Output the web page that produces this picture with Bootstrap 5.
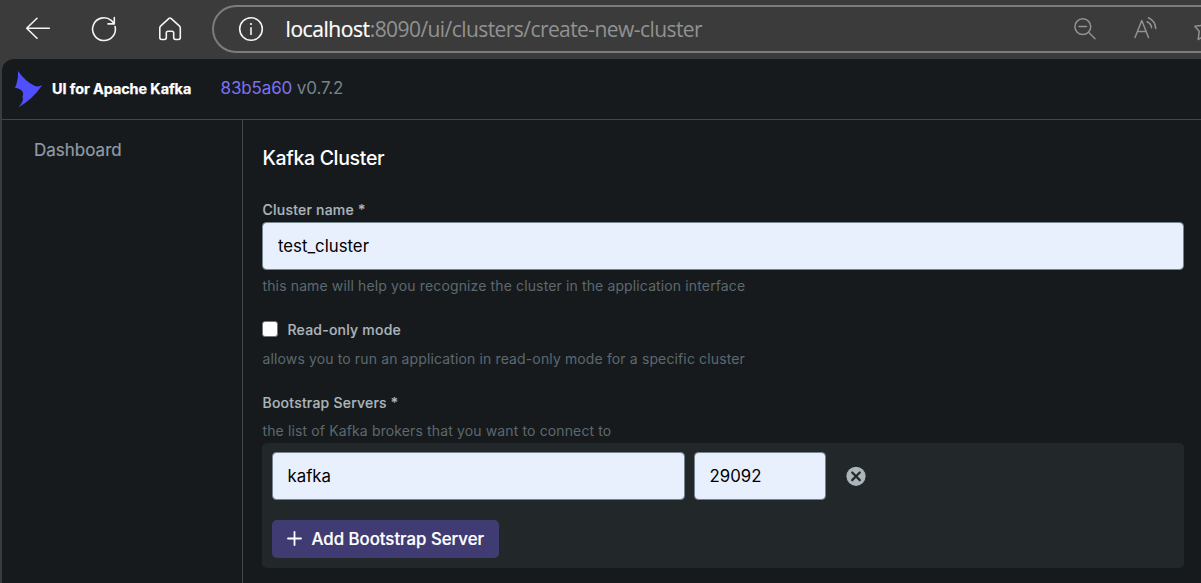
<!DOCTYPE html>
<html lang="en">
<head>
<meta charset="utf-8">
<meta name="viewport" content="width=device-width, initial-scale=1">
<title>UI for Apache Kafka</title>
<link href="https://cdn.jsdelivr.net/npm/bootstrap@5.3.0/dist/css/bootstrap.min.css" rel="stylesheet">
<style>
body { background: #3b3b3b; font-family: Inter, "Liberation Sans", sans-serif; color: #fff; height: 583px; }
svg { display: block; flex: none; }
.toolbar { height: 59px; padding: 5px 0 6px 24px; }
.toolbar-btn { width: 28px; margin-right: 38px; color: #f4f4f4; }
.toolbar-btn.home { margin-right: 28px; }
.address { height: 48px; border: 2px solid #7c7c7c; border-right: 0; border-radius: 24px 0 0 24px; padding-left: 23px; }
.address-text { font: 21px/28px "Open Sans", "Noto Sans", sans-serif; margin: 0 0 0 20.5px; color: #929292; letter-spacing: -.57px; }
.address-text span { color: #fff; letter-spacing: -.42px; -webkit-text-stroke: .2px #fff; }
.address-tools { color: #929292; gap: 36px; margin-right: -17px; }
.app-shell { margin-left: 2px; height: 524px; background: #171a1c; border-top-left-radius: 12px; }
.app-head { height: 61px; border-bottom: 1px solid #414749; padding-left: 13px; }
.brand { font-size: 14.4px; font-weight: 700; margin-left: 9px; width: 168.5px; letter-spacing: -.06px; -webkit-text-stroke: .25px #fff; }
.version { font-size: 17px; color: #73848c; letter-spacing: -.13px; }
.version a { color: #7b72f2; }
.side { width: 241px; border-right: 1px solid #414749; padding: 19px 0 0 32px; font-size: 17px; line-height: 22px; color: #8f9ca6; -webkit-text-stroke: .2px #8f9ca6; }
.main-pane { padding: 26px 17px 0 19px; }
.page-title { font-size: 19.5px; line-height: 24px; font-weight: 500; margin: 0 0 32px; padding-left: .5px; letter-spacing: -.32px; }
.field-label { font-size: 14px; font-weight: 500; line-height: 16px; padding-left: .5px; color: #abb5ba; letter-spacing: .22px; -webkit-text-stroke: .15px #abb5ba; }
.hint { font-size: 14px; line-height: 18px; padding-left: .5px; color: #5c6970; letter-spacing: .13px; }
.form-control.field { height: 48px; padding: 0 15px; font-size: 16.8px; color: #000; background: #e8f0fe; border: 1px solid #73848c; border-radius: 4.5px; }
.form-control.host, .form-control.port { padding-left: 14.5px; }
.form-check-input.flag { width: 16px; height: 16px; margin: -2px 0 0; background: #fff; border: 1px solid #767676; border-radius: 3px; }
.server-box { height: 125px; background: #22282a; border-radius: 5px; padding: 9px 10px; }
.host { width: 413px; }
.port { width: 132px; }
.btn.add-server { height: 38px; width: 227px; background: #403c73; color: #fff; font-size: 16.8px; font-weight: 500; border: 0; border-radius: 5px; padding: 1px 15px 0; gap: 9.5px; white-space: nowrap; -webkit-text-stroke: .2px #fff; }
</style>
</head>
<body class="overflow-hidden">
<div class="toolbar d-flex align-items-center">
  <svg class="toolbar-btn" width="28" height="28" viewBox="0 0 28 28" fill="none" stroke="currentColor" stroke-width="1.6" stroke-linecap="round" stroke-linejoin="round"><path d="M25.3 13.3H2.7M13 3.3 2.7 13.3 13 23.3"/></svg>
  <svg class="toolbar-btn" width="28" height="28" viewBox="0 0 28 28" fill="none" stroke="currentColor" stroke-width="1.6" stroke-linecap="round" stroke-linejoin="round"><path d="M25.1 11.5A11.4 11.4 0 1 1 21.2 5.3L24 8.6M24.3 2.5V8.9H18"/></svg>
  <svg class="toolbar-btn home" width="28" height="28" viewBox="0 0 28 28" fill="none" stroke="currentColor" stroke-width="1.6" stroke-linejoin="round"><path d="M13 3.4Q14 2.6 15 3.4L23.3 10.8Q24.3 11.7 24.3 13V22.6Q24.3 24.5 22.5 24.5H19.5Q17.7 24.5 17.7 22.6V18Q17.7 16.2 16 16.2H12Q10.3 16.2 10.3 18V22.6Q10.3 24.5 8.5 24.5H5.7Q3.8 24.5 3.8 22.6V13Q3.8 11.7 4.8 10.8Z"/></svg>
  <div class="address d-flex align-items-center flex-grow-1">
    <svg width="28" height="28" viewBox="0 0 28 28" fill="none" stroke="#f4f4f4" stroke-width="1.6"><circle cx="14" cy="14" r="11.3"/><path d="M14 12.3V20"/><circle cx="14" cy="9" r="1.1" fill="#f4f4f4" stroke="none"/></svg>
    <div class="address-text text-nowrap"><span>localhost</span>:8090/ui/clusters/create-new-cluster</div>
    <div class="address-tools d-flex ms-auto">
      <svg width="24" height="24" viewBox="0 0 24 24" fill="none" stroke="currentColor" stroke-width="1.5" stroke-linecap="round"><circle cx="9.8" cy="9.7" r="7.9"/><path d="M6 9.5h7.5M15.5 15.3 22 21.7"/></svg>
      <svg width="25" height="24" viewBox="0 0 25 24" fill="none" stroke="currentColor" stroke-width="1.5" stroke-linecap="round" stroke-linejoin="round"><path d="M2 20.5 8.8 3.5 15.5 20.5M4.6 14.5H13M14 4.7Q18.3 6.7 18.6 10.8M15.5.8Q22.2 4 22.7 11.5"/></svg>
      <svg width="24" height="24" viewBox="0 0 24 24" fill="none" stroke="currentColor" stroke-width="1.5" stroke-linejoin="round"><path d="M10 2.5 7.2 8.4 .8 9.2 5.2 14.2 4.2 22.5 10 19.3 16 22.5 15 14.2 20 9.2 13 8.4Z"/></svg>
    </div>
  </div>
</div>
<div class="app-shell d-flex flex-column">
  <header class="app-head d-flex align-items-center">
    <svg width="28" height="37" viewBox="0 0 28 37" fill="#4f4fff"><path d="M3 0Q10 10 19 14.5Q23 16.5 27.3 14Q18 28 3.2 36.5Q7.8 31.5 8 28Q7 25.5 8.3 23Q7.5 17.8 0 16.8Q3.3 10 3 0Z"/></svg>
    <div class="brand text-nowrap">UI for Apache Kafka</div>
    <div class="version"><a class="text-decoration-none">83b5a60</a> v0.7.2</div>
  </header>
  <div class="d-flex flex-grow-1">
    <nav class="side flex-shrink-0">Dashboard</nav>
    <main class="main-pane flex-grow-1">
      <h1 class="page-title">Kafka Cluster</h1>
      <label class="field-label d-block mb-1" for="name">Cluster name *</label>
      <input id="name" class="form-control field" value="test_cluster">
      <div class="hint" style="margin-top:7px">this name will help you recognize the cluster in the application interface</div>
      <div class="d-flex align-items-center" style="margin-top:27px">
        <input id="ro" type="checkbox" class="form-check-input flag">
        <label class="field-label" for="ro" style="margin-left:9px">Read-only mode</label>
      </div>
      <div class="hint" style="margin-top:12px">allows you to run an application in read-only mode for a specific cluster</div>
      <div class="field-label" style="margin-top:27px">Bootstrap Servers *</div>
      <div class="hint" style="margin:11px 0 3px">the list of Kafka brokers that you want to connect to</div>
      <div class="server-box">
        <div class="d-flex align-items-center">
          <input class="form-control field host" value="kafka">
          <input class="form-control field port" value="29092" style="margin:0 19.5px 0 9px">
          <svg width="20" height="20" viewBox="0 0 20 20"><circle cx="10" cy="10.3" r="9.6" fill="#abb5ba"/><path d="M6.2 6.5l7.6 7.6m0-7.6-7.6 7.6" stroke="#22282a" stroke-width="2.2" stroke-linecap="round"/></svg>
        </div>
        <button class="btn add-server d-flex align-items-center" style="margin-top:20px"><svg width="15" height="15" viewBox="0 0 15 15" stroke="#fff" stroke-width="1.8" stroke-linecap="round" style="margin-top:-2px"><path d="M7.5 1v13M1 7.5h13"/></svg>Add Bootstrap Server</button>
      </div>
    </main>
  </div>
</div>
<script src="https://cdn.jsdelivr.net/npm/bootstrap@5.3.0/dist/js/bootstrap.bundle.min.js"></script>
</body>
</html>
